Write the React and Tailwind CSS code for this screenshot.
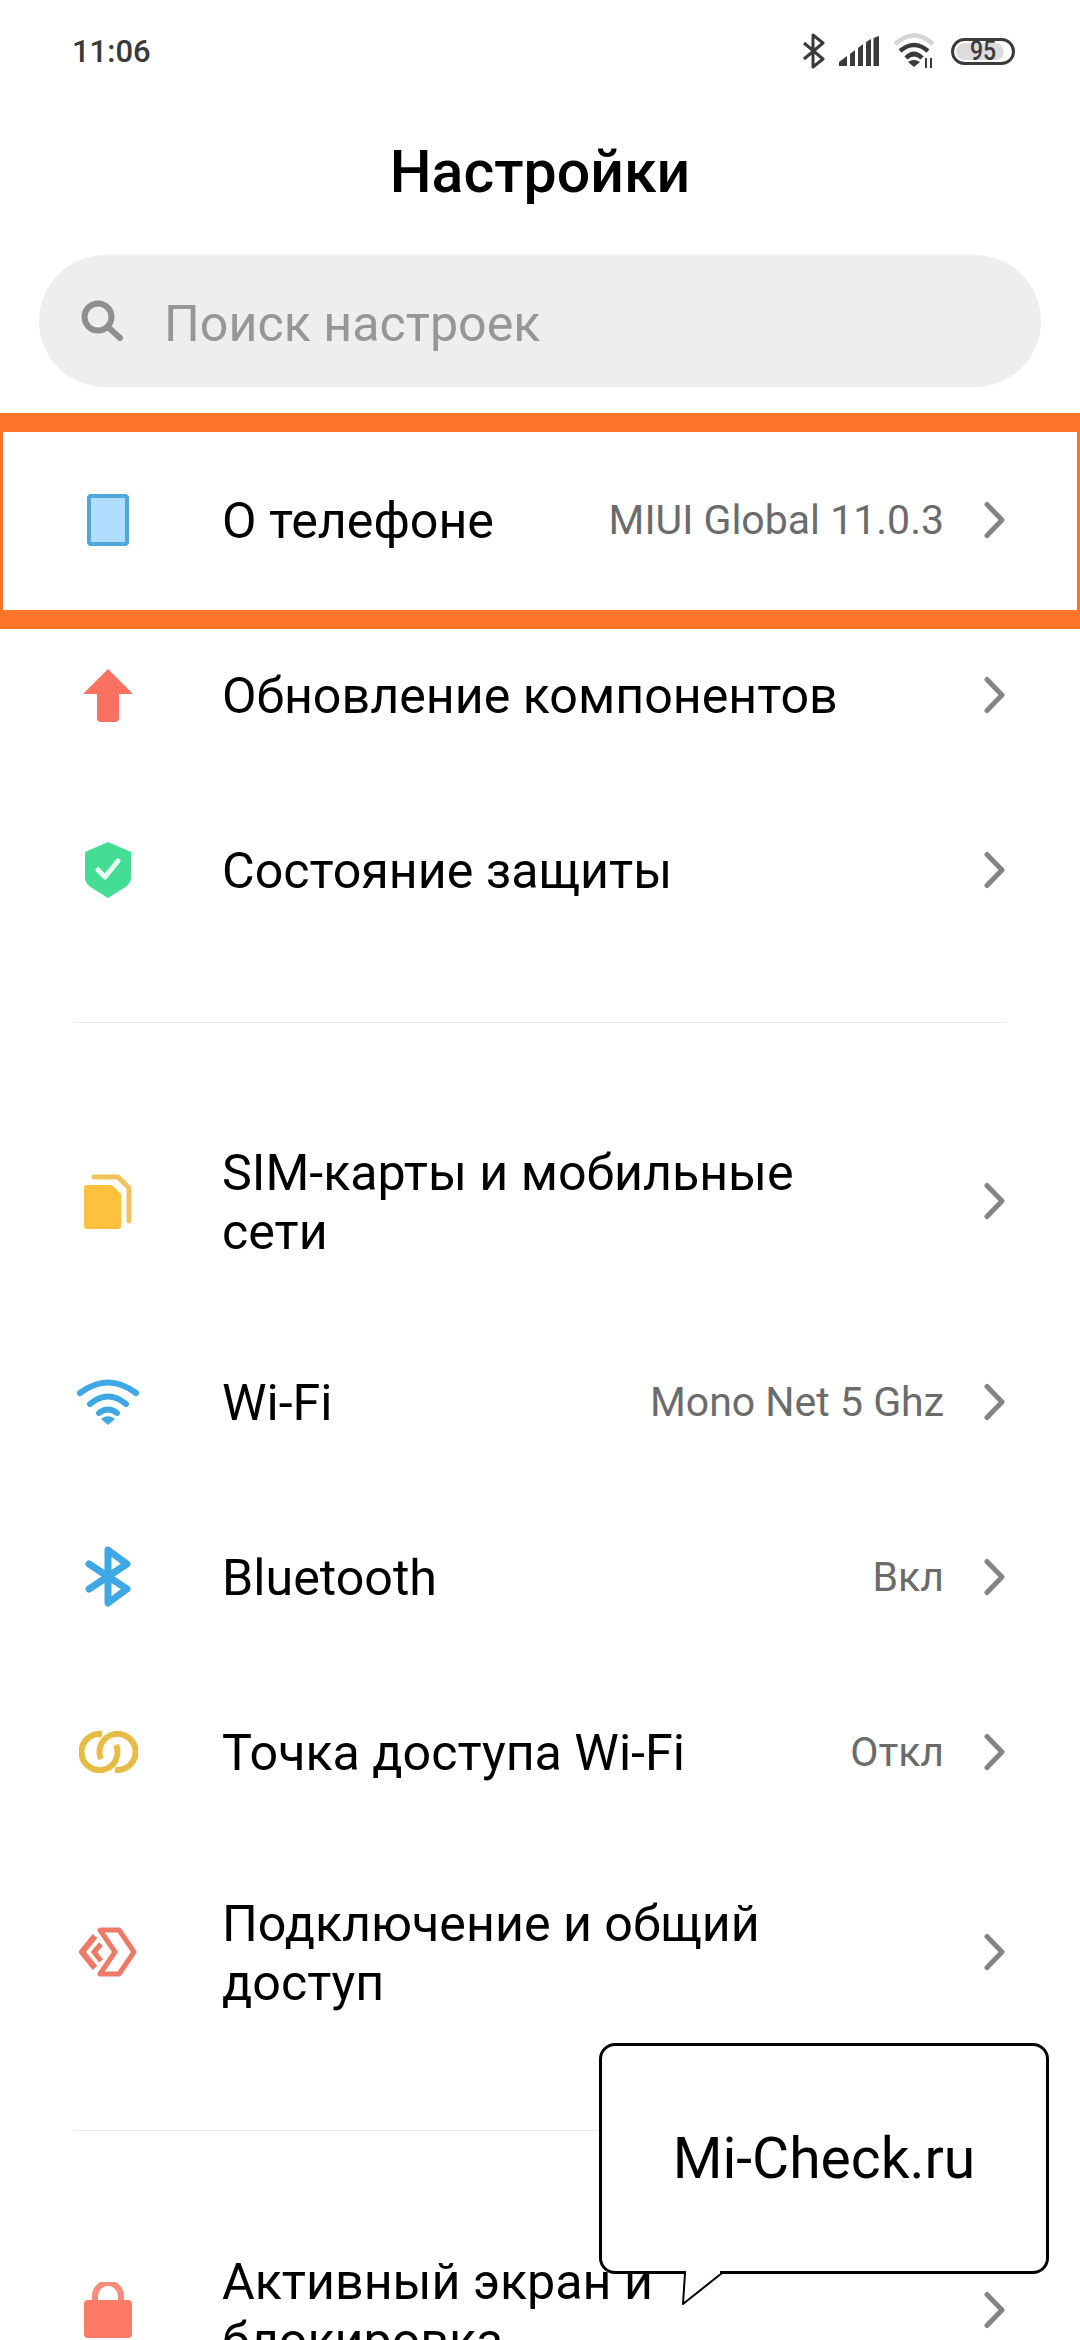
import React from 'react';

const font = { fontFamily: 'Roboto, sans-serif' };

function Chevron() {
  return (
    <svg width="22" height="38" viewBox="0 0 22 38" fill="none" className="shrink-0">
      <path d="M3 3.5l15 15.5L3 34.5" stroke="#848484" strokeWidth="5" strokeLinecap="round" strokeLinejoin="round" />
    </svg>
  );
}

function TabletIcon() {
  return <div className="w-[42px] h-[52px] rounded-[4px] border-[4px] border-[#4fa8dc] bg-[#b0deff]" />;
}

function UpdateIcon() {
  return (
    <svg width="50" height="54" viewBox="0 0 50 54">
      <path d="M25 1L49 25Q50 26 48 26H36V50a4 4 0 0 1-4 4H18a4 4 0 0 1-4-4V26H2Q0 26 1 25z" fill="#fa7161" />
    </svg>
  );
}

function ShieldIcon() {
  return (
    <svg width="46" height="56" viewBox="0 0 46 56">
      <path d="M23 0L46 10V35Q46 42 39 46L23 56L7 46Q0 42 0 35V10z" fill="#43dd95" />
      <path d="M13 28l7 7L33 19" fill="none" stroke="#eafff4" strokeWidth="5" strokeLinecap="round" strokeLinejoin="round" />
    </svg>
  );
}

function SimIcon() {
  return (
    <svg width="48" height="55" viewBox="0 0 48 55">
      <path d="M10 3H34L45 14V47" fill="none" stroke="#f2c35c" strokeWidth="5" strokeLinecap="round" strokeLinejoin="round" />
      <path d="M3 11H28L37 20V52a3 3 0 0 1-3 3H3a3 3 0 0 1-3-3V14a3 3 0 0 1 3-3z" fill="#fdc13d" />
    </svg>
  );
}

function WifiIcon() {
  return (
    <svg width="62" height="46" viewBox="0 0 62 46" fill="none">
      <path d="M3 14Q31 -7 59 14" stroke="#3fa7e4" strokeWidth="6" strokeLinecap="round" />
      <path d="M13 25Q31 10 49 25" stroke="#3fa7e4" strokeWidth="6" strokeLinecap="round" />
      <path d="M22 34Q31 27 40 34" stroke="#3fa7e4" strokeWidth="6" strokeLinecap="round" />
      <path d="M31 45L25 40Q31 36 37 40z" fill="#3fa7e4" stroke="#3fa7e4" strokeWidth="1.5" strokeLinejoin="round" />
    </svg>
  );
}

function BluetoothIcon() {
  return (
    <svg width="46" height="61" viewBox="0 0 46 61" fill="none">
      <path d="M4 18L42 43L23 57V4L42 18L4 43" stroke="#3fa7e4" strokeWidth="7" strokeLinecap="round" strokeLinejoin="round" />
    </svg>
  );
}

function HotspotIcon() {
  return (
    <svg width="59" height="42" viewBox="0 0 59 42" fill="none">
      <path d="M23 3.3A18 18 0 1 0 37 14" stroke="#e8bc44" strokeWidth="6" />
      <path d="M36 38.7A18 18 0 1 0 22 28" stroke="#e8bc44" strokeWidth="6" />
    </svg>
  );
}

function ShareIcon() {
  return (
    <svg width="58" height="50" viewBox="0 0 58 50" fill="none">
      <path d="M21 3H40L55 25L40 47H21L36 25z" stroke="#ee7a66" strokeWidth="5" strokeLinejoin="round" />
      <path d="M16 9L3 25L16 41" stroke="#ee7a66" strokeWidth="6" />
      <path d="M22 17L15 25L22 34" stroke="#ee7a66" strokeWidth="5" />
    </svg>
  );
}

function LockIcon() {
  return (
    <svg width="48" height="56" viewBox="0 0 48 56" fill="none">
      <path d="M11 20V14a13 13 0 0 1 26 0v6" stroke="#f98c7b" strokeWidth="6" />
      <rect x="0" y="18" width="48" height="38" rx="4" fill="#fd7b66" />
    </svg>
  );
}

function Row({ icon, title, value, className = 'h-[175px]' }) {
  return (
    <div className={`flex items-center pl-[72px] pr-[74px] ${className}`}>
      <div className="w-[76px] -ml-[2px] mr-[76px] flex justify-center items-center shrink-0">{icon}</div>
      <div className="flex-1 min-w-0">
        <div className="max-w-[640px] pt-[2px] text-[50.2px] leading-[59px] text-black">{title}</div>
      </div>
      {value && <div className="pt-[3px] text-[41px] text-[#6b6b6b] whitespace-nowrap mr-[40px]">{value}</div>}
      <Chevron />
    </div>
  );
}

function StatusBar() {
  return (
    <div className="h-[102px] flex items-center justify-between pl-[72px] pr-[65px]">
      <span className="pt-[2px] text-[31px] font-medium text-[#3a3a3a]">11:06</span>
      <div className="flex items-center gap-[14px]">
        <svg width="22" height="36" viewBox="0 0 22 36" fill="none">
          <path d="M1 10L20 26L10 34V2L20 10L1 26" stroke="#3a3a3a" strokeWidth="3" strokeLinejoin="round" />
        </svg>
        <svg width="40" height="30" viewBox="0 0 40 30" fill="#3a3a3a">
          <path d="M0 30V26L8 20V30z" />
          <path d="M11 30V18L16 14V30z" />
          <path d="M19 30V12L24 8V30z" />
          <path d="M27 30V6L32 3V30z" />
          <path d="M34.5 30V2L40 0V30z" />
        </svg>
        <svg width="44" height="36" viewBox="0 0 44 36" fill="none">
          <path d="M2 11Q21 -6 40 11" stroke="#d4d4d4" strokeWidth="4.5" />
          <path d="M7 18Q21 6 35 18" stroke="#3a3a3a" strokeWidth="4.5" />
          <path d="M13 25Q21 17 29 25" stroke="#3a3a3a" strokeWidth="4.5" />
          <path d="M21 34L15 29Q21 25 27 29z" fill="#3a3a3a" />
          <path d="M33 25v10M38 25v10" stroke="#3a3a3a" strokeWidth="2" />
        </svg>
        <div className="relative w-[64px] h-[27px] rounded-full border-[3px] border-[#3a3a3a] flex items-center p-[2px]">
          <div className="w-[88%] h-full rounded-full bg-[#dcdcdc]" />
          <span className="absolute inset-0 flex items-center justify-center text-[27px] font-medium text-[#3a3a3a] scale-x-[0.85]">95</span>
        </div>
      </div>
    </div>
  );
}

export default function App() {
  return (
    <div style={font} className="relative w-[1080px] h-[2340px] overflow-hidden bg-white">
      <StatusBar />
      <h1 className="h-[140px] flex items-center justify-center text-[59px] font-medium text-black">Настройки</h1>
      <div className="h-[132px] mx-[39px] mt-[13px] rounded-full bg-[#eeeeee] flex items-center pl-[42px]">
        <svg width="42" height="42" viewBox="0 0 42 42" fill="none" className="shrink-0">
          <circle cx="17" cy="17" r="13.5" stroke="#8f8f8f" strokeWidth="6" />
          <path d="M27 27l12 11" stroke="#8f8f8f" strokeWidth="6" strokeLinecap="round" />
        </svg>
        <span className="ml-[41px] pt-[6px] text-[50.2px] text-[#969696]">Поиск настроек</span>
      </div>

      <div className="relative mt-[45px]">
        <div className="absolute left-0 right-0 top-[-19px] h-[216px] border-x-[3px] border-y-[19px] border-[#fe752a]" />
        <Row icon={<TabletIcon />} title="О телефоне" value="MIUI Global 11.0.3" />
      </div>
      <Row icon={<UpdateIcon />} title="Обновление компонентов" />
      <Row icon={<ShieldIcon />} title="Состояние защиты" />

      <div className="mx-[74px] mt-[65px] h-px bg-[#e8e8e8]" />

      <div className="mt-[65px]">
        <Row icon={<SimIcon />} title="SIM-карты и мобильные сети" className="h-[226px]" />
        <Row icon={<WifiIcon />} title="Wi-Fi" value="Mono Net 5 Ghz" />
        <Row icon={<BluetoothIcon />} title="Bluetooth" value="Вкл" />
        <Row icon={<HotspotIcon />} title="Точка доступа Wi-Fi" value="Откл" />
        <Row icon={<ShareIcon />} title="Подключение и общий доступ" className="h-[226px]" />
      </div>

      <div className="mx-[74px] mt-[65px] h-px bg-[#e8e8e8]" />

      <div className="mt-[66px]">
        <Row icon={<LockIcon />} title="Активный экран и блокировка" className="h-[226px]" />
      </div>

      {/* watermark bubble sits over the list */}
      <div className="absolute left-[599px] top-[2043px] w-[450px] h-[231px] rounded-[16px] border-[3px] border-black bg-white flex items-center justify-center text-[57px] text-black">
        Mi-Check.ru
        <svg width="44" height="38" viewBox="0 0 44 38" fill="none" className="absolute left-[80px] top-[225px]">
          <path d="M3 2L1 33L40 2" stroke="#000" strokeWidth="2" strokeLinejoin="round" fill="#fff" />
          <path d="M4 1.5H38" stroke="#fff" strokeWidth="3" />
        </svg>
      </div>
    </div>
  );
}
